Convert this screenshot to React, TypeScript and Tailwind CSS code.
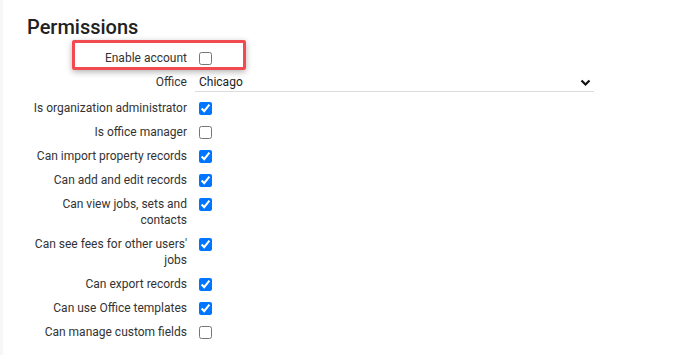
import { useState } from "react";

type Perm = { label: string; checked: boolean };

const perms: Perm[] = [
  { label: "Is organization administrator", checked: true },
  { label: "Is office manager", checked: false },
  { label: "Can import property records", checked: true },
  { label: "Can add and edit records", checked: true },
  { label: "Can view jobs, sets and contacts", checked: true },
  { label: "Can see fees for other users' jobs", checked: true },
  { label: "Can export records", checked: true },
  { label: "Can use Office templates", checked: true },
  { label: "Can manage custom fields", checked: false },
];

function Row({ label, children }: { label: string; children: React.ReactNode }) {
  return (
    <div className="flex items-start gap-3">
      <div className="w-[160px] shrink-0 text-right text-[12px] leading-4 text-[#333]">{label}</div>
      {children}
    </div>
  );
}

function Check({ checked }: { checked: boolean }) {
  const [on, setOn] = useState(checked);
  return (
    <input
      type="checkbox"
      checked={on}
      onChange={e => setOn(e.target.checked)}
      className="m-0 mt-[1.5px] h-[13px] w-[13px] shrink-0"
    />
  );
}

export default function App() {
  return (
    <div
      className="relative min-h-[355px] bg-white pl-[27px] pt-[13px]"
      style={{ fontFamily: "Roboto, 'Noto Sans', sans-serif" }}
    >
      <div className="absolute left-0 top-0 h-full w-[3px] bg-[#f7f7f7]" />
      <h1 className="text-[20px] leading-7 font-medium text-[#212121]">Permissions</h1>

      <div className="mt-[9px] flex flex-col gap-2">
        <Row label="Enable account">
          <Check checked={false} />
        </Row>
        <Row label="Office">
          <div className="flex h-[18px] w-[399px] items-start justify-between border-b border-[#dcdcdc] pl-1 pr-[3px] -ml-1">
            <span className="text-[12px] leading-4 text-[#212121]">Chicago</span>
            <svg width="11" height="8" viewBox="0 0 11 8" className="mt-[5px]">
              <path d="M1.5 1.5 L5.5 5.5 L9.5 1.5" stroke="#111" strokeWidth="2.2" fill="none" />
            </svg>
          </div>
        </Row>
        {perms.map(p => (
          <Row key={p.label} label={p.label}>
            <Check checked={p.checked} />
          </Row>
        ))}
      </div>

      <div className="absolute left-[72px] top-[40px] h-[30px] w-[174px] rounded-[2px] border-[3px] border-[#f24a51] shadow-[0_2px_6px_rgba(0,0,0,0.3)]" />
    </div>
  );
}
